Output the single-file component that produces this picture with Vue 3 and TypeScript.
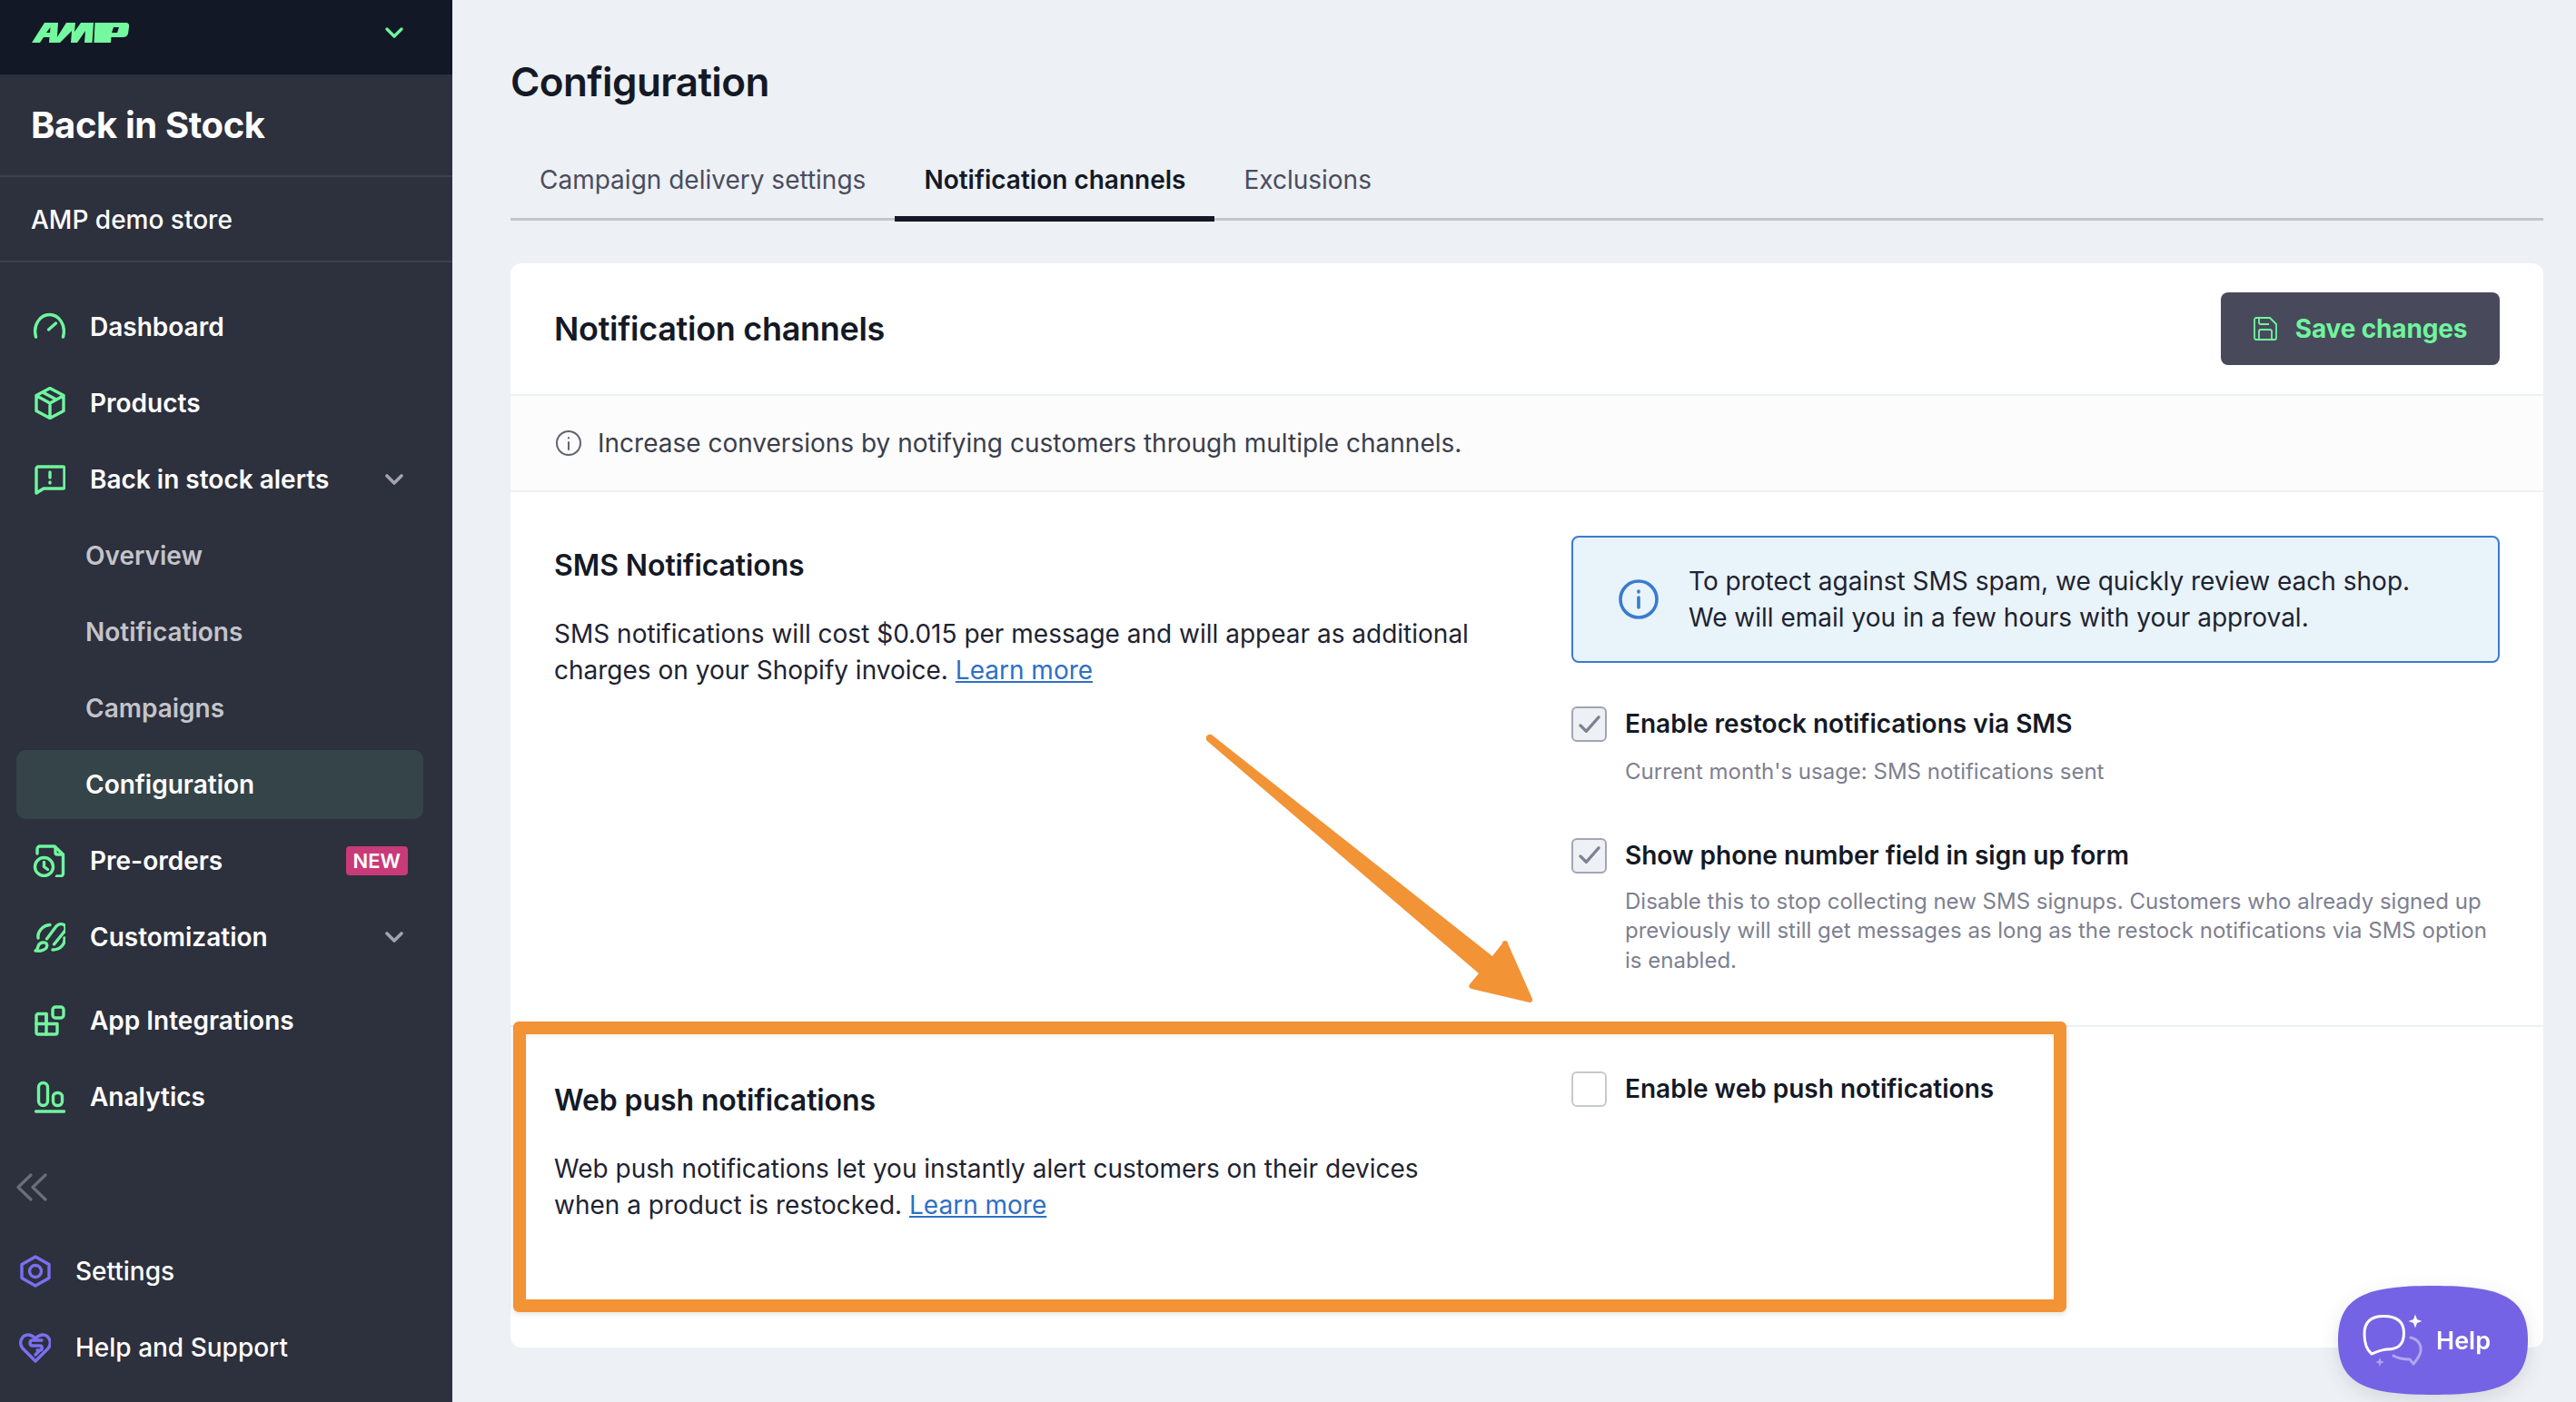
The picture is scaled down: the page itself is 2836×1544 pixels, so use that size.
<script setup lang="ts">
interface NavItem {
  label: string
  icon?: string
  chevron?: boolean
  badge?: string
  sub?: boolean
  active?: boolean
}

const navItems: NavItem[] = [
  { label: 'Dashboard', icon: 'dashboard' },
  { label: 'Products', icon: 'products' },
  { label: 'Back in stock alerts', icon: 'alerts', chevron: true },
  { label: 'Overview', sub: true },
  { label: 'Notifications', sub: true },
  { label: 'Campaigns', sub: true },
  { label: 'Configuration', sub: true, active: true },
  { label: 'Pre-orders', icon: 'preorders', badge: 'NEW' },
  { label: 'Customization', icon: 'custom', chevron: true },
]

const tabs = ['Campaign delivery settings', 'Notification channels', 'Exclusions']
</script>

<template>
  <div class="page">
    <aside class="sidebar">
      <div class="brand">
        <svg class="logo" viewBox="0 0 107 22">
          <path d="M0 22 14 0H29L27.500 22H19L19.500 16H13L9 22ZM16 11H20L20.500 5Z" fill="#74f9a0" fill-rule="evenodd" />
          <path d="M24 22 38 0H48L47 10 54 0H68L66.500 22H58L59 9 50 22H43L44 9 31 22Z" fill="#74f9a0" />
          <path d="M69.500 0H104C107 0 107.500 3 107 5L106 12C105 15 103 16 100 16H87.500L87 22H68.500ZM90 5 88 11H94L96 5Z" fill="#74f9a0" fill-rule="evenodd" />
        </svg>
        <svg class="chev" viewBox="0 0 20 12"><path d="M2 2l8 8 8-8" fill="none" stroke="#6ff59e" stroke-width="3.200" stroke-linecap="round" stroke-linejoin="round" /></svg>
      </div>
      <div class="app-name">Back in Stock</div>
      <div class="store">AMP demo store</div>
      <nav class="nav">
        <div v-for="item in navItems" :key="item.label" class="nav-item" :class="{ sub: item.sub, active: item.active }">
          <svg v-if="item.icon" class="ico" viewBox="0 0 36 36" fill="none" stroke="#6ff59e" stroke-width="3.400" stroke-linecap="round" stroke-linejoin="round">
            <template v-if="item.icon === 'dashboard'">
              <path d="M3.500 29C0 16 8 4.500 18.500 4.500S37 16 33.500 29" />
              <path d="M17.500 21l8-7" />
            </template>
            <template v-else-if="item.icon === 'products'">
              <path d="M19 1.500 34 9.500v17L19 34.500 4 26.500v-17zM4.500 10 19 18l14.500-8M19 18v16M11 6l15 8" />
            </template>
            <template v-else-if="item.icon === 'alerts'">
              <path d="M4 33V6a2 2 0 0 1 2-2h27a2 2 0 0 1 2 2v20a2 2 0 0 1-2 2H12z" />
              <path d="M19 10v6M19 21v1" />
            </template>
            <template v-else-if="item.icon === 'preorders'">
              <path d="M5 10V5a3 3 0 0 1 3-3h16l9.500 9v21a3 3 0 0 1-3 3h-4" />
              <path d="M25 3v6a2 2 0 0 0 2 2h5" />
              <circle cx="12.500" cy="24.500" r="10" />
              <path d="M12.500 19.500v5l4 3" />
            </template>
            <template v-else>
              <path d="M15.500 20 26 6c3-3 7-3 9-1s1 6-1 8L23.500 26" />
              <path d="M6 19C5 12 11 5 19 4.500M35 19c1 7-5 13-13 13" />
              <path d="M3 33c3-1 2-4 4-7 2-2 6-3 8-1 2 3 0 6-3 7-3 2-6 1-9 1z" />
            </template>
          </svg>
          <span class="nav-label">{{ item.label }}</span>
          <span v-if="item.badge" class="badge">{{ item.badge }}</span>
          <svg v-if="item.chevron" class="chev grey" viewBox="0 0 20 12"><path d="M2 2l8 8 8-8" fill="none" stroke="#a2a3af" stroke-width="3.600" stroke-linecap="round" stroke-linejoin="round" /></svg>
        </div>
        <div class="nav-gap"></div>
        <div class="nav-item">
          <svg class="ico" viewBox="0 0 36 36" fill="none" stroke="#6ff59e" stroke-width="3.400" stroke-linejoin="round" stroke-linecap="round">
            <path d="M15 10.500H6a2 2 0 0 0-2 2V31a2 2 0 0 0 2 2h19a2 2 0 0 0 2-2V21.500H15z" />
            <path d="M15 10.500V33M4 21.500h12" />
            <rect x="22" y="3" width="12" height="12" rx="3" />
          </svg>
          <span class="nav-label">App Integrations</span>
        </div>
        <div class="nav-item">
          <svg class="ico" viewBox="0 0 36 36" fill="none" stroke="#6ff59e" stroke-width="3.400" stroke-linecap="round">
            <rect x="6.500" y="2.500" width="10" height="25" rx="5" />
            <rect x="22.500" y="13.500" width="10" height="14" rx="4.500" />
            <path d="M3.500 34h31" />
          </svg>
          <span class="nav-label">Analytics</span>
        </div>
      </nav>
      <div class="collapse">
        <svg viewBox="0 0 34 31" fill="none" stroke="#6c6d7a" stroke-width="3.200" stroke-linecap="round" stroke-linejoin="round"><path d="M16 2 2 15.500 16 29M32 2 18 15.500 32 29" /></svg>
      </div>
      <div class="footer-nav">
        <div class="nav-item foot">
          <svg class="ico" viewBox="0 0 36 36" fill="none" stroke="#7b6ff0" stroke-width="3.400" stroke-linejoin="round">
            <path d="M19 2 34 10.500v15L19 34 4 25.500v-15z" />
            <circle cx="19" cy="18" r="6.500" />
          </svg>
          <span class="nav-label plain">Settings</span>
        </div>
        <div class="nav-item foot">
          <svg class="ico" viewBox="0 0 36 36" fill="none" stroke="#7b6ff0" stroke-width="3.400" stroke-linecap="round" stroke-linejoin="round">
            <path d="M19 33 5 19C0 13 4 4 11 4c4 0 6 2 8 4 2-2 4-4 8-4 7 0 11 9 6 15z" />
            <path d="M26 10H16c-4 0-4 6 0 6h8c3 0 3 5 0 5h-3M19 26l4-4" />
          </svg>
          <span class="nav-label plain">Help and Support</span>
        </div>
      </div>
    </aside>

    <main class="main">
      <h1 class="title">Configuration</h1>
      <div class="tabs">
        <div v-for="tab in tabs" :key="tab" class="tab" :class="{ on: tab === 'Notification channels' }">{{ tab }}</div>
      </div>

      <section class="card">
        <header class="card-head">
          <h2>Notification channels</h2>
          <button class="save">
            <svg viewBox="0 0 26 26" fill="none" stroke="#6ff59e" stroke-width="1.800" stroke-linejoin="round">
              <path d="M3 1h15l7 7v15a2 2 0 0 1-2 2H3a2 2 0 0 1-2-2V3a2 2 0 0 1 2-2z" />
              <path d="M6 1v5a2 2 0 0 0 2 2h9M6 25V16a2 2 0 0 1 2-2h10a2 2 0 0 1 2 2v9" />
            </svg>
            Save changes
          </button>
        </header>
        <div class="intro">
          <svg viewBox="0 0 30 30" fill="none" stroke="#61636f" stroke-width="2" stroke-linecap="round">
            <circle cx="15" cy="15" r="13" />
            <path d="M15 14v8M15 9v.5" />
          </svg>
          Increase conversions by notifying customers through multiple channels.
        </div>

        <div class="row sms">
          <div class="col-left">
            <h3>SMS Notifications</h3>
            <p>SMS notifications will cost $0.015 per message and will appear as additional charges on your Shopify invoice. <a>Learn more</a></p>
          </div>
          <div class="col-right">
            <div class="notice">
              <svg viewBox="0 0 44 44" fill="none" stroke="#3b7bce" stroke-width="3.600" stroke-linecap="round">
                <circle cx="22" cy="22" r="20" />
                <path d="M22 20v11M22 13v1" />
              </svg>
              <div>To protect against SMS spam, we quickly review each shop.<br />We will email you in a few hours with your approval.</div>
            </div>
            <div class="check-row first">
              <span class="box checked"><svg viewBox="0 0 28 24"><path d="M3 13l7 7L25 3" fill="none" stroke="#7f8190" stroke-width="3.600" stroke-linecap="round" stroke-linejoin="round" /></svg></span>
              <div>
                <div class="check-label">Enable restock notifications via SMS</div>
                <div class="check-help">Current month's usage: SMS notifications sent</div>
              </div>
            </div>
            <div class="check-row second">
              <span class="box checked"><svg viewBox="0 0 28 24"><path d="M3 13l7 7L25 3" fill="none" stroke="#7f8190" stroke-width="3.600" stroke-linecap="round" stroke-linejoin="round" /></svg></span>
              <div>
                <div class="check-label">Show phone number field in sign up form</div>
                <div class="check-help">Disable this to stop collecting new SMS signups. Customers who already signed up previously will still get messages as long as the restock notifications via SMS option is enabled.</div>
              </div>
            </div>
          </div>
        </div>

        <div class="row push">
          <div class="col-left">
            <h3>Web push notifications</h3>
            <p>Web push notifications let you instantly alert customers on their devices when a product is restocked. <a>Learn more</a></p>
          </div>
          <div class="col-right">
            <div class="check-row lone">
              <span class="box"></span>
              <div class="check-label">Enable web push notifications</div>
            </div>
          </div>
        </div>
      </section>
    </main>

    <!-- annotation drawn over the screenshot -->
    <div class="highlight"></div>
    <svg class="arrow" width="2836" height="1544" viewBox="0 0 2836 1544">
      <path d="M1329 816a4 4 0 0 1 6-6L1643 1053l11-14a3 3 0 0 1 6 0L1687 1100a3 3 0 0 1-3 4L1620 1089a3 3 0 0 1-2-5L1628 1072z" fill="#f29336" />
    </svg>

    <div class="help">
      <svg class="help-shape" viewBox="0 0 209 120"><path d="M0 60C0 12 30 0 104.500 0S209 12 209 60 179 120 104.500 120 0 108 0 60Z" fill="#7463e4" /></svg>
      <svg class="help-icon" viewBox="0 0 70 62" fill="none" stroke-linecap="round" stroke-linejoin="round">
        <path d="M11 46C5 41 3 33 3 24 3 11 10 4.500 24 4.500 40 4.500 46.500 12 46.500 23 46.500 36 40 41 28 41 23 41 19 43 11 46Z" stroke="#fff" stroke-width="3" />
        <path d="M54 28C62 30 66 36 65 43 64 49 61 52 57 57L53 52C46 52 40 51 35 48" stroke="#b0a6f0" stroke-width="3" />
        <path d="M59 2.500 61 8 66.500 10 61 12 59 17.500 57 12 51.500 10 57 8z" fill="#fff" />
        <path d="M20 50 21.300 53.700 25 55 21.300 56.300 20 60 18.700 56.300 15 55 18.700 53.700z" fill="#b0a6f0" />
      </svg>
      <span>Help</span>
    </div>
  </div>
</template>

<style scoped>
.page {
  position: relative;
  display: flex;
  width: 2836px;
  height: 1544px;
  overflow: hidden;
  background: #edf0f4;
  font-family: Inter, "Liberation Sans", sans-serif;
  color: #141926;
}

/* sidebar */
.sidebar {
  width: 498px;
  flex: none;
  background: #2d303d;
  display: flex;
  flex-direction: column;
  color: #fff;
}
.brand {
  height: 82px;
  background: #131826;
  display: flex;
  align-items: center;
  justify-content: space-between;
  padding: 0 54px 10px 35px;
  box-sizing: border-box;
}
.logo {
  width: 107px;
  height: 22px;
}
.chev {
  width: 20px;
  height: 12px;
}
.app-name {
  height: 113px;
  line-height: 111px;
  padding-left: 34px;
  font-size: 40px;
  font-weight: 700;
  letter-spacing: -0.4px;
  border-bottom: 2px solid #3e404d;
  box-sizing: border-box;
}
.store {
  height: 94px;
  line-height: 94px;
  padding-left: 34px;
  font-size: 28px;
  font-weight: 500;
  border-bottom: 2px solid #3e404d;
  box-sizing: border-box;
}
.nav {
  padding: 29px 0 0;
  display: flex;
  flex-direction: column;
}
.nav-item {
  height: 84px;
  display: flex;
  align-items: center;
  padding: 0 28px 0 36px;
  flex: none;
}
.ico {
  width: 36px;
  height: 36px;
  flex: none;
  margin-right: 27px;
}
.nav-label {
  font-size: 28px;
  font-weight: 600;
  flex: 1;
}
.nav-label.plain {
  font-weight: 500;
}
.nav-item .chev.grey {
  margin-right: 26px;
}
.sub {
  padding-left: 94px;
}
.sub .nav-label {
  color: #c3c4c9;
}
.sub.active {
  position: relative;
  z-index: 0;
}
.sub.active::before {
  content: "";
  position: absolute;
  z-index: -1;
  left: 18px;
  top: 4px;
  width: 448px;
  height: 76px;
  border-radius: 10px;
  background: #354448;
}
.sub.active .nav-label {
  color: #fff;
}
.badge {
  background: #c93a78;
  color: #fff;
  font-size: 22px;
  font-weight: 600;
  height: 32px;
  line-height: 32px;
  padding: 0 8px;
  border-radius: 4px;
  margin-right: 21px;
}
.nav-gap {
  height: 8px;
}
.collapse {
  padding: 42px 0 0 18px;
  height: 66px;
}
.collapse svg {
  width: 34px;
  height: 31px;
  display: block;
}
.foot {
  padding-left: 20px;
}

/* main */
.main {
  flex: 1;
  padding: 0 36px 0 64px;
  min-width: 0;
}
.title {
  margin: 0;
  padding-top: 62px;
  font-size: 44px;
  line-height: 56px;
  font-weight: 600;
  letter-spacing: -0.6px;
}
.tabs {
  margin-top: 48px;
  height: 77px;
  display: flex;
  border-bottom: 3px solid #c5c7cf;
  box-sizing: border-box;
}
.tab {
  padding: 0 32px;
  line-height: 64px;
  font-size: 28px;
  color: #4a4c5e;
}
.tab.on {
  font-weight: 600;
  color: #141926;
  border-bottom: 6px solid #141926;
  height: 78px;
  box-sizing: border-box;
}
.card {
  margin-top: 47px;
  background: #fff;
  border-radius: 12px;
  height: 1194px;
  overflow: hidden;
}
.card-head {
  height: 146px;
  padding: 0 48px;
  display: flex;
  align-items: center;
  justify-content: space-between;
  border-bottom: 2px solid #edf0f4;
  box-sizing: border-box;
}
.card-head h2 {
  margin: 0;
  font-size: 36px;
  font-weight: 600;
  letter-spacing: -0.3px;
}
.save {
  width: 307px;
  height: 80px;
  border: 0;
  border-radius: 8px;
  background: #484a5c;
  color: #6ff59e;
  font: 700 28px Inter, "Liberation Sans", sans-serif;
  letter-spacing: -0.15px;
  display: flex;
  align-items: center;
  justify-content: center;
  gap: 20px;
}
.save svg {
  width: 26px;
  height: 26px;
}
.intro {
  height: 106px;
  background: #fdfcfc;
  border-bottom: 2px solid #edf0f4;
  box-sizing: border-box;
  padding: 0 48px;
  display: flex;
  align-items: center;
  gap: 18px;
  font-size: 28px;
  color: #3b3e4c;
}
.intro svg {
  width: 30px;
  height: 30px;
  margin-left: 1px;
  margin-right: -1px;
}
.row {
  display: flex;
  padding: 48px 48px 0;
}
.sms {
  height: 589px;
  border-bottom: 2px solid #edf0f4;
  box-sizing: border-box;
}
.col-left {
  width: 1024px;
  flex: none;
  margin-right: 96px;
}
.col-left h3 {
  margin: 13px 0 0;
  font-size: 32px;
  line-height: 40px;
  font-weight: 600;
  letter-spacing: -0.1px;
}
.col-left p {
  margin: 35px 0 0;
  font-size: 28px;
  line-height: 40px;
  color: #1e2331;
}
.col-left a {
  color: #2f6fc4;
  text-decoration: underline;
}
.col-right {
  flex: 1;
}
.notice {
  height: 140px;
  border: 2px solid #3b7bce;
  border-radius: 8px;
  background: #e8f3fa;
  box-sizing: border-box;
  display: flex;
  align-items: center;
  padding-left: 50px;
  gap: 33px;
  font-size: 28px;
  line-height: 40px;
  color: #1e2331;
}
.notice svg {
  width: 44px;
  height: 44px;
  flex: none;
}
.check-row {
  display: flex;
  gap: 20px;
}
.check-row.first {
  margin-top: 48px;
}
.check-row.first .check-help {
  margin-top: 17px;
}
.check-row.second {
  margin-top: 56px;
}
.check-row.lone {
  margin-top: 1px;
}
.box {
  width: 39px;
  height: 39px;
  flex: none;
  border: 2px solid #c7c9d1;
  border-radius: 6px;
  box-sizing: border-box;
  background: #fff;
  display: flex;
  align-items: center;
  justify-content: center;
}
.box.checked {
  background: #edf0f4;
  border-color: #a3a5b3;
}
.box svg {
  width: 26px;
  height: 22px;
}
.check-label {
  font-size: 28px;
  line-height: 39px;
  font-weight: 600;
}
.check-help {
  margin-top: 15px;
  font-size: 24px;
  line-height: 32.5px;
  color: #7e8090;
}
.highlight {
  position: absolute;
  left: 565px;
  top: 1125px;
  width: 1710px;
  height: 320px;
  border: 14px solid #f29336;
  border-radius: 6px;
  box-sizing: border-box;
  box-shadow: 0 2px 6px rgba(60, 40, 20, 0.14), inset 0 2px 4px rgba(60, 40, 20, 0.06);
}
.arrow {
  position: absolute;
  left: 0;
  top: 0;
  pointer-events: none;
}
.help {
  position: absolute;
  left: 2574px;
  top: 1416px;
  width: 209px;
  height: 120px;
  filter: drop-shadow(0 6px 10px rgba(30, 30, 60, 0.12));
  display: flex;
  align-items: center;
  padding-left: 26px;
  box-sizing: border-box;
  color: #fff;
  font-size: 27px;
  font-weight: 600;
  gap: 12px;
}
.help-shape {
  position: absolute;
  left: 0;
  top: 0;
  width: 209px;
  height: 120px;
}
.help-icon {
  position: relative;
  width: 70px;
  height: 62px;
  flex: none;
}
.help span {
  position: relative;
}
</style>

<style>
html,
body {
  margin: 0;
  background: #edf0f4;
}
</style>
